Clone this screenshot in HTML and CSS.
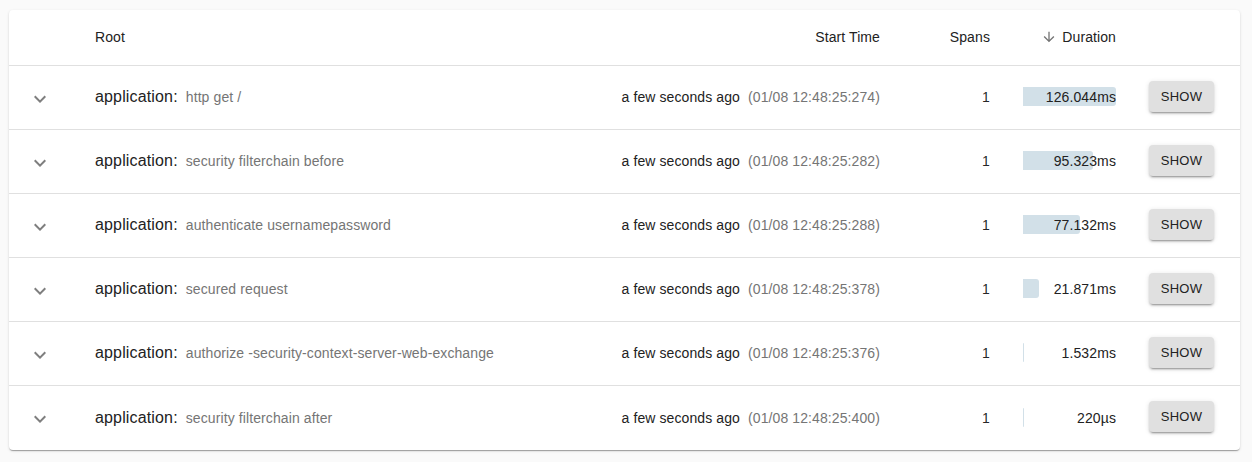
FILE: index.html
```html
<!DOCTYPE html>
<html>
<head>
<meta charset="utf-8">
<link rel="stylesheet" href="styles.css">
</head>
<body>
<div class="card">
  <div class="row head">
    <div class="cell"></div>
    <div class="cell">Root</div>
    <div class="cell right">Start Time</div>
    <div class="cell right">Spans</div>
    <div class="cell right dur-head">
      <svg class="sort" viewBox="0 0 24 24"><path d="M20 12l-1.41-1.41L13 16.17V4h-2v12.17l-5.58-5.59L4 12l8 8 8-8z"/></svg>
      <span>Duration</span>
    </div>
    <div class="cell"></div>
  </div>

  <div class="row">
    <div class="cell chev"><svg viewBox="0 0 24 24"><path d="M16.59 8.59L12 13.17 7.41 8.59 6 10l6 6 6-6z"/></svg></div>
    <div class="cell name"><span class="svc">application:</span><span class="op">http get /</span></div>
    <div class="cell right"><span class="ago">a few seconds ago</span><span class="ts">(01/08 12:48:25:274)</span></div>
    <div class="cell right">1</div>
    <div class="cell dur"><div class="durbox"><div class="bar" style="width:93px"></div><span class="durtxt">126.044ms</span></div></div>
    <div class="cell act"><button class="btn">Show</button></div>
  </div>

  <div class="row">
    <div class="cell chev"><svg viewBox="0 0 24 24"><path d="M16.59 8.59L12 13.17 7.41 8.59 6 10l6 6 6-6z"/></svg></div>
    <div class="cell name"><span class="svc">application:</span><span class="op">security filterchain before</span></div>
    <div class="cell right"><span class="ago">a few seconds ago</span><span class="ts">(01/08 12:48:25:282)</span></div>
    <div class="cell right">1</div>
    <div class="cell dur"><div class="durbox"><div class="bar" style="width:70.3px"></div><span class="durtxt">95.323ms</span></div></div>
    <div class="cell act"><button class="btn">Show</button></div>
  </div>

  <div class="row">
    <div class="cell chev"><svg viewBox="0 0 24 24"><path d="M16.59 8.59L12 13.17 7.41 8.59 6 10l6 6 6-6z"/></svg></div>
    <div class="cell name"><span class="svc">application:</span><span class="op">authenticate usernamepassword</span></div>
    <div class="cell right"><span class="ago">a few seconds ago</span><span class="ts">(01/08 12:48:25:288)</span></div>
    <div class="cell right">1</div>
    <div class="cell dur"><div class="durbox"><div class="bar" style="width:56.9px"></div><span class="durtxt">77.132ms</span></div></div>
    <div class="cell act"><button class="btn">Show</button></div>
  </div>

  <div class="row">
    <div class="cell chev"><svg viewBox="0 0 24 24"><path d="M16.59 8.59L12 13.17 7.41 8.59 6 10l6 6 6-6z"/></svg></div>
    <div class="cell name"><span class="svc">application:</span><span class="op">secured request</span></div>
    <div class="cell right"><span class="ago">a few seconds ago</span><span class="ts">(01/08 12:48:25:378)</span></div>
    <div class="cell right">1</div>
    <div class="cell dur"><div class="durbox"><div class="bar" style="width:16.1px"></div><span class="durtxt">21.871ms</span></div></div>
    <div class="cell act"><button class="btn">Show</button></div>
  </div>

  <div class="row">
    <div class="cell chev"><svg viewBox="0 0 24 24"><path d="M16.59 8.59L12 13.17 7.41 8.59 6 10l6 6 6-6z"/></svg></div>
    <div class="cell name"><span class="svc">application:</span><span class="op">authorize -security-context-server-web-exchange</span></div>
    <div class="cell right"><span class="ago">a few seconds ago</span><span class="ts">(01/08 12:48:25:376)</span></div>
    <div class="cell right">1</div>
    <div class="cell dur"><div class="durbox"><div class="bar" style="width:1.13px"></div><span class="durtxt">1.532ms</span></div></div>
    <div class="cell act"><button class="btn">Show</button></div>
  </div>

  <div class="row last">
    <div class="cell chev"><svg viewBox="0 0 24 24"><path d="M16.59 8.59L12 13.17 7.41 8.59 6 10l6 6 6-6z"/></svg></div>
    <div class="cell name"><span class="svc">application:</span><span class="op">security filterchain after</span></div>
    <div class="cell right"><span class="ago">a few seconds ago</span><span class="ts">(01/08 12:48:25:400)</span></div>
    <div class="cell right">1</div>
    <div class="cell dur"><div class="durbox"><div class="bar" style="width:0.16px"></div><span class="durtxt">220µs</span></div></div>
    <div class="cell act"><button class="btn">Show</button></div>
  </div>
</div>
</body>
</html>
```

FILE: styles.css
```css
html, body {
  margin: 0;
  padding: 0;
  background: #fafafa;
}
body {
  padding: 10px 12px 12px 9px;
  font-family: "Liberation Sans", Arial, Helvetica, sans-serif;
  color: rgba(0, 0, 0, 0.87);
  font-size: 14px;
}
.card {
  width: 1231px;
  background: #fff;
  border-radius: 4px;
  box-shadow: 0 2px 1px -1px rgba(0,0,0,0.2), 0 1px 1px 0 rgba(0,0,0,0.14), 0 1px 3px 0 rgba(0,0,0,0.12);
  overflow: hidden;
}
.row {
  display: grid;
  grid-template-columns: 86px 1fr 300px 110px 126px 124px;
  height: 64px;
  border-bottom: 1px solid #e0e0e0;
  box-sizing: border-box;
  align-items: center;
  letter-spacing: 0.1px;
}
.row.head {
  height: 56px;
  color: #222;
  padding-bottom: 1px;
}
.row.last {
  border-bottom: none;
}
.cell {
  display: flex;
  align-items: center;
  white-space: nowrap;
}
.right {
  justify-content: flex-end;
}
.chev {
  padding-left: 19px;
  padding-top: 2px;
}
.chev svg {
  width: 24px;
  height: 24px;
  fill: rgba(0, 0, 0, 0.5);
}
.name, .row > .right, .dur {
  padding-bottom: 1px;
}
.svc {
  font-size: 16px;
  color: #222;
  letter-spacing: 0.15px;
}
.op {
  margin-left: 8px;
  color: #757575;
  font-size: 14px;
}
.ago {
  color: #222;
}
.ts {
  margin-left: 8px;
  color: #757575;
}
.dur-head .sort {
  width: 16px;
  height: 16px;
  fill: #757575;
  margin-right: 5px;
}
.dur {
  padding-left: 33px;
}
.durbox {
  position: relative;
  width: 93px;
  height: 20px;
  display: flex;
  align-items: center;
  justify-content: flex-end;
}
.bar {
  position: absolute;
  left: 0;
  top: 0;
  height: 19px;
  background: #d2e0e8;
  border-radius: 0 3px 3px 0;
}
.durtxt {
  position: relative;
  color: #222;
}
.act {
  padding-left: 33px;
}
.btn {
  font-family: "Liberation Sans", Arial, Helvetica, sans-serif;
  font-size: 13px;
  letter-spacing: 0.3px;
  text-transform: uppercase;
  color: #222;
  background: #e0e0e0;
  border: none;
  border-radius: 4px;
  width: 65px;
  height: 31px;
  padding: 0;
  margin-top: -3px;
  box-shadow: 0 3px 1px -2px rgba(0,0,0,0.2), 0 2px 2px 0 rgba(0,0,0,0.14), 0 1px 5px 0 rgba(0,0,0,0.12);
}
```
